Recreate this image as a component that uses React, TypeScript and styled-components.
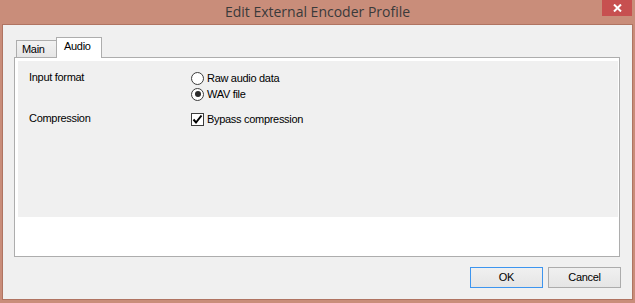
import React from "react";
import styled, { createGlobalStyle } from "styled-components";

const Global = createGlobalStyle`
  html, body { margin: 0; padding: 0; background: #c98d7a; }
  body { width: 635px; height: 303px; overflow: hidden; }
`;

const uiFont = `"Liberation Sans", Arial, sans-serif`;

const Window = styled.div`
  width: 635px;
  height: 303px;
  background: #c98d7a;
  display: flex;
  flex-direction: column;
  box-sizing: border-box;
`;

const TitleBar = styled.div`
  height: 24px;
  display: grid;
  grid-template-columns: 1fr auto 1fr;
  align-items: start;
`;

const Title = styled.div`
  grid-column: 2;
  font-family: "Open Sans", "Noto Sans", sans-serif;
  font-size: 14px;
  line-height: 24px;
  color: #3a3a3a;
  white-space: nowrap;
`;

const CloseButton = styled.div`
  grid-column: 3;
  justify-self: end;
  width: 30px;
  height: 16px;
  margin-right: 3px;
  background: #c75050;
  display: flex;
  align-items: center;
  justify-content: center;
`;

const Client = styled.div`
  flex: 1;
  margin: 0 2px 3px 2px;
  border: 1px solid #b07462;
  background: #f0f0f0;
  padding: 12px 11px 11px 11px;
  display: flex;
  flex-direction: column;
  font-family: ${uiFont};
  font-size: 11px;
  letter-spacing: -0.3px;
  color: #000;
`;

const TabStrip = styled.div`
  display: flex;
  align-items: flex-end;
  margin-left: 2px;
  height: 20px;
`;

const Tab = styled.div<{ $active?: boolean }>`
  box-sizing: border-box;
  position: relative;
  z-index: ${(p) => (p.$active ? 1 : 0)};
  width: ${(p) => (p.$active ? 46 : 40)}px;
  height: ${(p) => (p.$active ? 21 : 17)}px;
  margin-bottom: ${(p) => (p.$active ? -1 : 0)}px;
  border: 1px solid #adadad;
  border-bottom: none;
  border-right: ${(p) => (p.$active ? "1px solid #adadad" : "none")};
  background: ${(p) =>
    p.$active ? "#ffffff" : "linear-gradient(#f2f2f2, #e6e6e6)"};
  padding: 1px 0 0 ${(p) => (p.$active ? 7 : 5)}px;
  line-height: 14px;
`;

const Panel = styled.div`
  box-sizing: border-box;
  height: 200px;
  margin-right: 1px;
  border: 1px solid #adadad;
  background: #ffffff;
  padding: 3px 1px 0 3px;
`;

const PageArea = styled.div`
  height: 156px;
  background: #f0f0f0;
  box-sizing: border-box;
  padding: 9px 0 0 11px;
  display: grid;
  grid-template-columns: 162px auto;
  grid-auto-rows: min-content;
  row-gap: 9px;
  align-content: start;
`;

const FieldLabel = styled.div`
  line-height: 14px;
  align-self: start;
`;

const OptionGroup = styled.div`
  display: flex;
  flex-direction: column;
`;

const Option = styled.div`
  height: 16px;
  display: flex;
  align-items: center;
  gap: 3px;
  line-height: 13px;
  white-space: nowrap;
`;

const RadioCircle = styled.span<{ $checked?: boolean }>`
  box-sizing: border-box;
  width: 13px;
  height: 13px;
  border-radius: 50%;
  border: 1px solid #3c3c3c;
  background: #fff;
  display: flex;
  align-items: center;
  justify-content: center;
  flex: none;
  &::after {
    content: "";
    display: ${(p) => (p.$checked ? "block" : "none")};
    width: 6px;
    height: 6px;
    border-radius: 50%;
    background: #2a2a2a;
  }
`;

const CheckBox = styled.span`
  box-sizing: border-box;
  width: 13px;
  height: 13px;
  border: 1px solid #3c3c3c;
  background: #fff;
  display: flex;
  align-items: center;
  justify-content: center;
  flex: none;
`;

const ButtonRow = styled.div`
  display: flex;
  justify-content: flex-end;
  gap: 5px;
  margin-top: 10px;
`;

const Button = styled.div<{ $default?: boolean }>`
  box-sizing: border-box;
  width: 73px;
  height: 21px;
  border: 1px solid ${(p) => (p.$default ? "#3d95ef" : "#acacac")};
  background: linear-gradient(#f0f0f0, #e5e5e5);
  display: flex;
  align-items: center;
  justify-content: center;
  line-height: 13px;
`;

export default function App() {
  return (
    <>
      <Global />
      <Window>
        <TitleBar>
          <Title>Edit External Encoder Profile</Title>
          <CloseButton>
            <svg width="9" height="8" viewBox="0 0 9 8">
              <path d="M1 0.5 L8 7.5 M8 0.5 L1 7.5" stroke="#fff" strokeWidth="2" />
            </svg>
          </CloseButton>
        </TitleBar>
        <Client>
          <TabStrip>
            <Tab>Main</Tab>
            <Tab $active>Audio</Tab>
          </TabStrip>
          <Panel>
            <PageArea>
              <FieldLabel>Input format</FieldLabel>
              <OptionGroup>
                <Option>
                  <RadioCircle />
                  Raw audio data
                </Option>
                <Option>
                  <RadioCircle $checked />
                  WAV file
                </Option>
              </OptionGroup>
              <FieldLabel>Compression</FieldLabel>
              <OptionGroup>
                <Option>
                  <CheckBox>
                    <svg width="11" height="11" viewBox="0 0 11 11">
                      <path
                        d="M1.5 5.5 L4 8.5 L9.5 1.5"
                        stroke="#000"
                        strokeWidth="2"
                        fill="none"
                      />
                    </svg>
                  </CheckBox>
                  Bypass compression
                </Option>
              </OptionGroup>
            </PageArea>
          </Panel>
          <ButtonRow>
            <Button $default>OK</Button>
            <Button>Cancel</Button>
          </ButtonRow>
        </Client>
      </Window>
    </>
  );
}
